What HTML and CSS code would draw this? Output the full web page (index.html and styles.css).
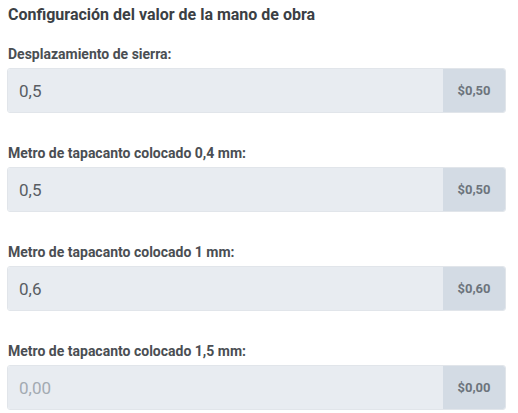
FILE: index.html
```html
<!DOCTYPE html>
<html lang="es">
<head>
<meta charset="utf-8">
<link rel="stylesheet" href="styles.css">
</head>
<body>
<div class="panel">
  <h2 class="title">Configuración del valor de la mano de obra</h2>
  <div class="field">
    <label class="label">Desplazamiento de sierra:</label>
    <div class="group">
      <div class="input">0,5</div>
      <div class="addon">$0,50</div>
    </div>
  </div>
  <div class="field">
    <label class="label">Metro de tapacanto colocado 0,4 mm:</label>
    <div class="group">
      <div class="input">0,5</div>
      <div class="addon">$0,50</div>
    </div>
  </div>
  <div class="field">
    <label class="label">Metro de tapacanto colocado 1 mm:</label>
    <div class="group">
      <div class="input">0,6</div>
      <div class="addon">$0,60</div>
    </div>
  </div>
  <div class="field">
    <label class="label">Metro de tapacanto colocado 1,5 mm:</label>
    <div class="group">
      <div class="input placeholder">0,00</div>
      <div class="addon">$0,00</div>
    </div>
  </div>
</div>
</body>
</html>
```
FILE: styles.css
```css
html, body {
  margin: 0;
  padding: 0;
  background: #ffffff;
}
body {
  font-family: Roboto, "Liberation Sans", sans-serif;
}
.panel {
  width: 499px;
  padding: 0 0 0 7px;
  display: flex;
  flex-direction: column;
}
.title {
  margin: 0;
  padding: 4px 0 0 1px;
  font-size: 16px;
  line-height: 22px;
  font-weight: 700;
  color: #3b3f44;
}
.field {
  display: flex;
  flex-direction: column;
  margin-top: 19px;
}
.field + .field {
  margin-top: 31px;
}
.label {
  padding-left: 1px;
  font-size: 14px;
  line-height: 18px;
  font-weight: 700;
  color: #4a4e53;
  margin-bottom: 5px;
}
.group {
  display: flex;
  height: 45px;
  border: 1px solid #e1e5ea;
  border-radius: 3px;
  overflow: hidden;
  box-sizing: border-box;
}
.input {
  flex: 1;
  background: #e8ecf1;
  display: flex;
  align-items: center;
  padding-left: 11px;
  font-size: 17px;
  color: #585d63;
}
.input.placeholder {
  color: #a3aab2;
}
.addon {
  width: 62px;
  background: #d3dbe4;
  display: flex;
  align-items: center;
  justify-content: center;
  font-size: 13px;
  font-weight: 700;
  color: #6c747c;
}
```
